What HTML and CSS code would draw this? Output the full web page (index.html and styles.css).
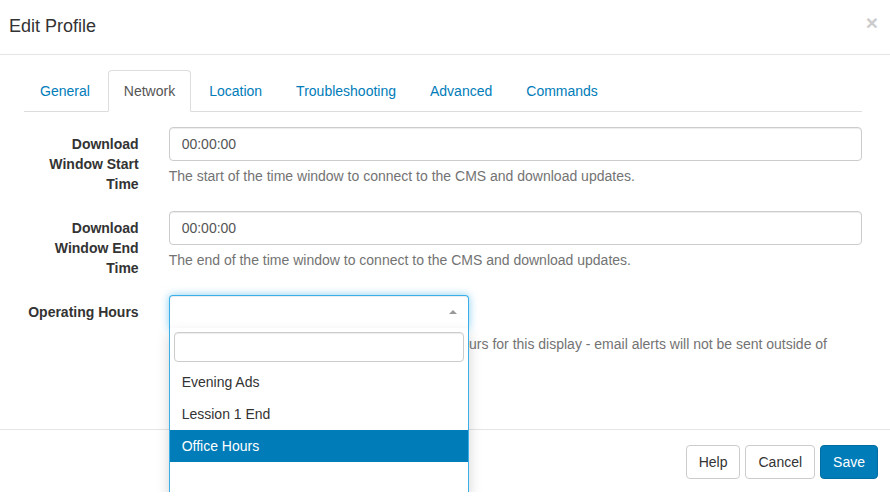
FILE: index.html
```html
<!DOCTYPE html>
<html lang="en">
<head>
  <meta charset="utf-8">
  <title>Edit Profile</title>
  <link rel="stylesheet" href="styles.css">
</head>
<body>
  <div class="modal" role="dialog" aria-labelledby="modal-title">
    <header class="modal-header">
      <h1 class="modal-title" id="modal-title">Edit Profile</h1>
      <button class="close" type="button" aria-label="Close">×</button>
    </header>

    <div class="modal-body">
      <nav class="tabs">
        <a class="tab" href="#general">General</a>
        <a class="tab tab-active" href="#network" aria-current="page">Network</a>
        <a class="tab" href="#location">Location</a>
        <a class="tab" href="#troubleshooting">Troubleshooting</a>
        <a class="tab" href="#advanced">Advanced</a>
        <a class="tab" href="#commands">Commands</a>
      </nav>

      <form id="profile-form">
        <div class="form-group">
          <label class="form-label" for="window-start">Download Window Start Time</label>
          <div class="form-field">
            <input class="form-control" id="window-start" type="text" value="00:00:00">
            <p class="help">The start of the time window to connect to the CMS and download updates.</p>
          </div>
        </div>
        <div class="form-group">
          <label class="form-label" for="window-end">Download Window End Time</label>
          <div class="form-field">
            <input class="form-control" id="window-end" type="text" value="00:00:00">
            <p class="help">The end of the time window to connect to the CMS and download updates.</p>
          </div>
        </div>
        <div class="form-group">
          <label class="form-label" for="operating-hours">Operating Hours</label>
          <div class="form-field">
            <div class="picker">
              <select class="picker-select" id="operating-hours">
                <option value="" selected></option>
                <option>Evening Ads</option>
                <option>Lession 1 End</option>
                <option>Office Hours</option>
              </select>
              <svg class="picker-arrow" viewBox="0 0 8 4" aria-hidden="true"><path d="M0 4 4 0 8 4Z"/></svg>
              <div class="picker-menu">
                <input class="picker-search" type="search" aria-label="Search operating hours">
                <ul class="picker-options" role="listbox" aria-label="Operating Hours">
                  <li class="picker-option" role="option">Evening Ads</li>
                  <li class="picker-option" role="option">Lession 1 End</li>
                  <li class="picker-option picker-option-active" role="option" aria-selected="true">Office Hours</li>
                  <li class="picker-option" role="option"></li>
                </ul>
              </div>
            </div>
            <p class="help">Select a day part that should act as operating hours for this display - email alerts will not be sent outside of operating hours</p>
          </div>
        </div>
      </form>
    </div>

    <footer class="modal-footer">
      <button class="btn" type="button">Help</button>
      <button class="btn" type="button">Cancel</button>
      <button class="btn btn-primary" type="submit" form="profile-form">Save</button>
    </footer>
  </div>
</body>
</html>
```

FILE: styles.css
```css
*,
*::before,
*::after {
  box-sizing: border-box;
}

body {
  margin: 0;
  background: #fff;
  color: #333;
  font-family: "Liberation Sans", Arial, sans-serif;
  font-size: 14px;
  line-height: 20px;
}

input,
select,
button {
  font: inherit;
}

/* Clips the open menu at the bottom edge of the dialog */
.modal {
  overflow: hidden;
}

.modal-header {
  display: flex;
  align-items: flex-start;
  justify-content: space-between;
  padding: 14px 12px 16px 9px;
  border-bottom: 1px solid #e5e5e5;
}

.modal-title {
  margin: 0;
  font-size: 18px;
  font-weight: 400;
  line-height: 24px;
}

.close {
  padding: 0;
  border: 0;
  background: none;
  color: #ccc;
  font-size: 21px;
  font-weight: 700;
  line-height: 18px;
}

.modal-body {
  padding: 15px 28px 30px 24px;
}

.tabs {
  display: flex;
  gap: 2px;
  margin-bottom: 15px;
  border-bottom: 1px solid #ddd;
}

.tab {
  margin-bottom: -1px;
  padding: 10px 15px;
  border: 1px solid transparent;
  border-radius: 4px 4px 0 0;
  color: #007cb9;
  text-decoration: none;
}

.tab-active {
  border-color: #ddd #ddd #fff;
  background: #fff;
  color: #555;
}

.form-group {
  display: grid;
  grid-template-columns: minmax(0, 1fr) minmax(0, 5fr);
  margin: 0 -15px 15px;
}

.form-label {
  padding: 7px 15px 0;
  font-weight: 700;
  text-align: right;
}

.form-field {
  padding: 0 15px;
}

.form-control {
  display: block;
  width: 100%;
  height: 34px;
  padding: 6px 12px;
  border: 1px solid #ccc;
  border-radius: 4px;
  background: #fff;
  box-shadow: inset 0 1px 1px rgba(0, 0, 0, 0.075);
  color: #555;
}

.help {
  margin: 5px 0 10px;
  color: #737373;
}

.picker {
  position: relative;
  width: 300px;
  max-width: 100%;
}

.picker-select {
  display: block;
  width: 100%;
  height: 34px;
  padding: 6px 24px 6px 12px;
  border: 1px solid #3bafe8;
  border-bottom-color: transparent;
  border-radius: 4px 4px 0 0;
  background: #fff;
  box-shadow: inset 0 1px 1px rgba(0, 0, 0, 0.075), 0 0 8px rgba(59, 175, 232, 0.6);
  color: #555;
  appearance: none;
}

.picker-arrow {
  position: absolute;
  top: 15px;
  right: 12px;
  width: 8px;
  height: 4px;
  fill: #999;
}

.picker-menu {
  position: absolute;
  top: 33px;
  left: 0;
  z-index: 1;
  width: 100%;
  padding-top: 4px;
  border: 1px solid #3bafe8;
  border-top: 0;
  background: #fff;
  box-shadow: 0 6px 12px rgba(0, 0, 0, 0.175);
}

.picker-search {
  display: block;
  width: calc(100% - 8px);
  height: 30px;
  margin: 0 4px 4px;
  padding: 4px;
  border: 1px solid #ccc;
  border-radius: 4px;
  background: #fff;
  box-shadow: inset 0 1px 1px rgba(0, 0, 0, 0.075);
  appearance: none;
}

.picker-options {
  margin: 0;
  padding: 0;
  list-style: none;
}

.picker-option {
  min-height: 32px;
  padding: 6px 12px;
}

.picker-option-active {
  background: #007cb9;
  color: #fff;
}

.modal-footer {
  display: flex;
  justify-content: flex-end;
  gap: 5px;
  padding: 15px 12px 13px;
  border-top: 1px solid #e5e5e5;
}

.btn {
  padding: 6px 12px;
  border: 1px solid #ccc;
  border-radius: 4px;
  background: #fff;
  color: #333;
}

.btn-primary {
  border-color: #006ea3;
  background: #007cb9;
  color: #fff;
}
```
